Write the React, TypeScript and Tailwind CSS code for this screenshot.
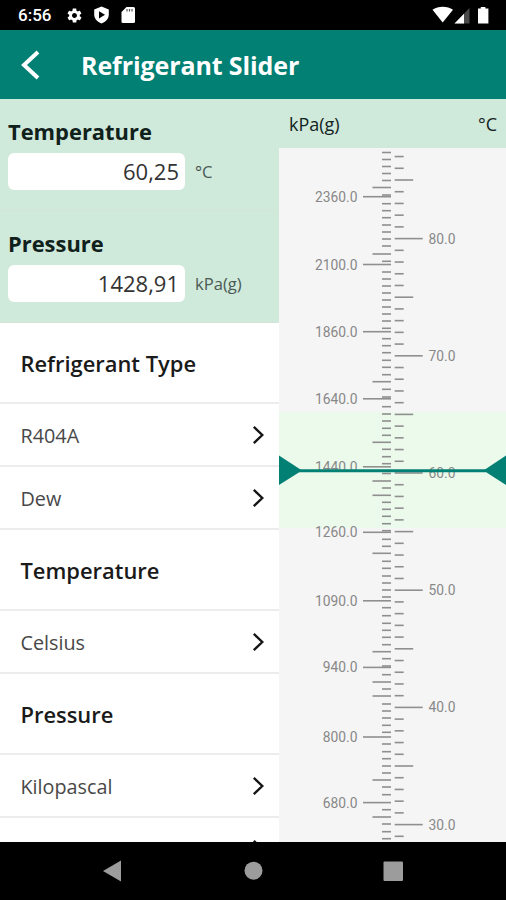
import { IoMdSettings } from "react-icons/io";

type Tick = { y: number; size: "sm" | "md" | "lg"; label?: string };

const small = [
  152.5, 159.5, 166.5, 173.5, 180.5, 195, 203.7, 210.7, 217.7, 225, 232, 239, 246, 261.3, 272, 279,
  286, 293, 300, 307, 314, 321, 328.3, 338.7, 345.7, 352.7, 360.3, 367.3, 374.7, 389.3, 397, 406.7,
  414, 421, 428.3, 435.3, 449.3, 456.7, 463.7, 473.5, 488, 502.3, 509.3, 516.3, 523.7, 530.7, 539.3,
  546.3, 561.3, 568.3, 576, 583, 590, 597, 607.7, 615.7, 623.3, 630.3, 637.3, 644.7, 658.7, 666,
  674.7, 689, 704, 711, 718, 725.3, 732.3, 744, 751.7, 758.7, 766, 773, 787, 794.7, 809.7, 824,
  831.7, 838.7,
];
const medium = [187.5, 254, 381.7, 442.3, 481, 495.3, 553.3, 651.7, 682, 696, 780, 817];

const pressureTicks: Tick[] = [
  ...small.map((y) => ({ y, size: "sm" as const })),
  ...medium.map((y) => ({ y, size: "md" as const })),
  { y: 196.7, size: "lg", label: "2360.0" },
  { y: 264.5, size: "lg", label: "2100.0" },
  { y: 331.7, size: "lg", label: "1860.0" },
  { y: 398.8, size: "lg", label: "1640.0" },
  { y: 466.8, size: "lg", label: "1440.0" },
  { y: 532.3, size: "lg", label: "1260.0" },
  { y: 600.8, size: "lg", label: "1090.0" },
  { y: 667.4, size: "lg", label: "940.0" },
  { y: 737, size: "lg", label: "800.0" },
  { y: 802.6, size: "lg", label: "680.0" },
];

// one tick per degree, 87°C at the top of the scale
const temperatureTicks: Tick[] = Array.from({ length: 59 }, (_, i) => {
  const deg = 87 - i;
  return {
    y: 238.6 + (80 - deg) * 11.72,
    size: deg % 10 === 0 ? "lg" : deg % 5 === 0 ? "md" : "sm",
    label: deg % 10 === 0 ? `${deg}.0` : undefined,
  };
});

const tickLength = { sm: 9, md: 18.5, lg: 28 };

const Chevron = () => (
  <svg width="12" height="20" viewBox="0 0 12 20" fill="none" stroke="#151515" strokeWidth="2.4">
    <path d="M1.8 1.8 10.3 10 1.8 18.2" />
  </svg>
);

const StatusBar = () => (
  <div className="flex h-[30px] shrink-0 items-center bg-black pl-[18px] pr-[16px] text-white">
    <span className="w-[48px] pt-px font-['Roboto'] text-[17px] font-medium leading-none">6:56</span>
    <IoMdSettings className="h-[17px] w-[17px]" />
    <svg className="ml-[10px]" width="17" height="18" viewBox="0 0 17 18">
      <path d="M8.5 0.5 1.2 3.4v5.2c0 4.2 3 7.5 7.3 8.9 4.3-1.4 7.3-4.7 7.3-8.9V3.4Z" fill="#fff" />
      <path d="M6 5.2v7.2l6-3.6Z" fill="#000" />
    </svg>
    <svg className="ml-[11px]" width="15" height="18" viewBox="0 0 15 18">
      <path d="M5.5 1H12.5Q14 1 14 2.5V15.5Q14 17 12.5 17H2Q.5 17 .5 15.5V6Z" fill="#fff" />
      <path d="M6 3v2.5M8.5 3v2.5M11 3v2.5" stroke="#555" strokeWidth="1.2" />
    </svg>
    <svg className="ml-auto" width="58" height="18" viewBox="0 0 58 18">
      <path d="M0.5 3.7C6-.2 15.5-.2 21 3.7L10.7 16.5Z" fill="#fff" />
      <path d="M37.5 2v15.5H22.5Z" fill="#4a4a4a" />
      <path d="M32 7.7v9.8h-9.5Z" fill="#fff" />
      <path d="M48.8 1h4.6v1.5h3v15H46V2.5h2.8Z" fill="#fff" />
    </svg>
  </div>
);

const Field = ({ label, value, unit }: { label: string; value: string; unit: string }) => (
  <div className="h-[112px] shrink-0 border-b border-[#d3e5d9] bg-[#cfe9db] px-2 pt-[18px]">
    <h2 className="text-[21.9px] font-bold leading-[30px] text-[#10201a]">{label}</h2>
    <div className="mt-[6px] flex items-center">
      <div className="h-[37px] w-[177px] rounded-[6px] bg-white pr-[6px] text-right text-[22px] leading-[37px] text-[#333]">
        {value}
      </div>
      <span className="ml-[10px] pt-[2px] text-[16.6px] text-[#4a5a54]">{unit}</span>
    </div>
  </div>
);

const Section = ({ title }: { title: string }) => (
  <h3 className="flex h-[81px] shrink-0 items-center border-b-2 border-[#ececec] pl-[20.5px] pt-[3px] text-[21.9px] font-semibold text-[#1a1a1a]">
    {title}
  </h3>
);

const Row = ({ text }: { text?: string }) => (
  <div className="flex h-[63px] shrink-0 items-center justify-between border-b-2 border-[#ececec] pl-[20.5px] pr-[15px] text-[19.8px] text-[#484848]">
    <span className="pt-[2px]">{text}</span>
    <Chevron />
  </div>
);

const Ruler = () => (
  <svg className="block h-full w-full" viewBox="279 148 227 694">
    <rect x="279" y="148" width="227" height="694" fill="#f5f5f5" />
    <rect x="279" y="412" width="227" height="116" fill="#ecfaec" />
    <g stroke="#8f8f8f" strokeWidth="1.6">
      {pressureTicks.map((t) => (
        <line key={t.y} x1={391 - tickLength[t.size]} x2="391" y1={t.y} y2={t.y} />
      ))}
      {temperatureTicks.map((t) => (
        <line key={t.y} x1="394.7" x2={394.7 + tickLength[t.size]} y1={t.y} y2={t.y} />
      ))}
    </g>
    <g fill="#888" fontSize="13.8" fontFamily="Roboto, sans-serif">
      {pressureTicks.filter((t) => t.label).map((t) => (
        <text key={t.label} x="357.5" y={t.y + 5} textAnchor="end">{t.label}</text>
      ))}
      {temperatureTicks.filter((t) => t.label).map((t) => (
        <text key={t.label} x="428.5" y={t.y + 5}>{t.label}</text>
      ))}
    </g>
    <path d="M299 470.8H486" stroke="#028074" strokeWidth="3" />
    <path d="M279 455.5V485L302 470.5ZM506 455.5V485L483.5 470.5Z" fill="#028074" />
  </svg>
);

export default function App() {
  return (
    <div className="flex h-[900px] w-[506px] flex-col overflow-hidden bg-white font-['Open_Sans',sans-serif]">
      <StatusBar />
      <header className="flex h-[69px] shrink-0 items-center bg-[#028074] pl-[21px] text-white">
        <svg width="20" height="30" viewBox="0 0 20 30" fill="none" stroke="#fff" strokeWidth="4">
          <path d="M17 2 3 15l14 13" />
        </svg>
        <h1 className="mt-[2px] ml-[40px] text-[25px] font-bold tracking-[-0.1px]">Refrigerant Slider</h1>
      </header>
      <main className="flex h-[743px] shrink-0 overflow-hidden">
        <div className="flex w-[279px] shrink-0 flex-col overflow-hidden">
          <Field label="Temperature" value="60,25" unit="°C" />
          <Field label="Pressure" value="1428,91" unit="kPa(g)" />
          <Section title="Refrigerant Type" />
          <Row text="R404A" />
          <Row text="Dew" />
          <Section title="Temperature" />
          <Row text="Celsius" />
          <Section title="Pressure" />
          <Row text="Kilopascal" />
          <Row />
        </div>
        <div className="flex w-[227px] flex-col">
          <div className="flex h-[49px] shrink-0 items-center justify-between bg-[#cfe9db] pl-[10px] pr-[9px] pt-[2px] text-[18px] text-[#14241e]">
            <span>kPa(g)</span>
            <span>°C</span>
          </div>
          <Ruler />
        </div>
      </main>
      <nav className="flex flex-1 items-center bg-black">
        <svg width="506" height="58" viewBox="0 842 506 58" fill="#9c9c9c">
          <path d="M103 871 121 860.5V881.5Z" />
          <circle cx="253.5" cy="870.7" r="9" />
          <rect x="383.5" y="861.5" width="19.5" height="19.5" rx="1" />
        </svg>
      </nav>
    </div>
  );
}
